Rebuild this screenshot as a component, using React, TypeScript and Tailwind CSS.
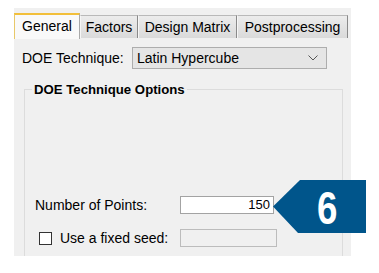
import React from "react";

const font = { fontFamily: '"Liberation Sans", Arial, sans-serif' };

function Tab({ label, w, selected }: { label: string; w: number; selected?: boolean }) {
  if (selected) {
    return (
      <div
        className="h-[26px] flex items-center justify-center bg-[#f9f9f9] border-t-2 border-l border-r border-t-[#f2bf3a] border-l-[#e8c869] border-r-[#a9a9a9] text-[14px] text-black pb-[1px]"
        style={{ width: w }}
      >
        {label}
      </div>
    );
  }
  return (
    <div
      className="h-[23px] mb-[1px] flex items-center justify-center bg-gradient-to-b from-[#ececec] to-[#dadada] border-t border-r border-t-[#b9b9b9] border-r-[#8a8a8a] border-l border-l-[#f6f6f6] text-[14px] text-black pt-[1px]"
      style={{ width: w }}
    >
      {label}
    </div>
  );
}

export default function App() {
  return (
    <div className="w-[379px] h-[273px] bg-white pt-[8px] pl-[14px] relative" style={font}>
      <div className="w-[337px] h-[248px] bg-[#f0f0f0] overflow-hidden flex flex-col pt-[5px]">
        <div className="flex items-end h-[26px]">
          <Tab label="General" w={66} selected />
          <Tab label="Factors" w={58} />
          <Tab label="Design Matrix" w={99} />
          <Tab label="Postprocessing" w={111} />
        </div>
        <div className="flex flex-col pt-[8px]">
          <div className="flex items-center h-[22px] pl-[8px]">
            <span className="text-[14px] text-black w-[110px]">DOE Technique:</span>
            <div className="w-[195px] h-[22px] bg-[#e5e5e5] border border-[#adadad] flex items-center justify-between pl-[4px] pr-[8px]">
              <span className="text-[14px] text-black">Latin Hypercube</span>
              <svg width="10" height="6" viewBox="0 0 10 6">
                <path d="M0.5 0.5 L5 5 L9.5 0.5" fill="none" stroke="#555" strokeWidth="1" />
              </svg>
            </div>
          </div>
          <fieldset className="ml-[10px] mr-[8px] mt-[13px] h-[200px] border border-[#dcdcdc] flex flex-col">
            <legend className="ml-[7px] px-[2px] text-[13.2px] font-bold text-black leading-[15px]">
              DOE Technique Options
            </legend>
            <div className="flex flex-col pt-[99px]">
              <div className="flex items-center h-[18px] pl-[10px]">
                <span className="text-[14px] text-black w-[145px]">Number of Points:</span>
                <div className="w-[94px] h-[18px] bg-white border border-[#a3a3a3] flex items-center justify-end pr-[3px] text-[13px] text-black">
                  150
                </div>
              </div>
              <div className="flex items-center h-[18px] pl-[14px] mt-[15px]">
                <div className="w-[13px] h-[13px] bg-white border border-[#333]" />
                <span className="text-[14px] text-black ml-[8px] w-[120px]">Use a fixed seed:</span>
                <div className="w-[97px] h-[18px] bg-[#f0f0f0] border border-[#bcbcbc]" />
              </div>
            </div>
          </fieldset>
        </div>
      </div>
      <div className="absolute left-[273px] top-[180px] w-[93px] h-[53px]">
        <svg width="93" height="53" viewBox="0 0 93 53" className="absolute inset-0">
          <polygon points="0,26.5 27,0 93,0 93,53 25,53" fill="#00558b" />
        </svg>
        <div className="absolute left-[28px] top-0 w-[52px] h-[53px] flex items-center justify-center text-white font-bold text-[47px] leading-none pt-[1px]">
          <span className="inline-block scale-x-[0.78]">6</span>
        </div>
      </div>
    </div>
  );
}
